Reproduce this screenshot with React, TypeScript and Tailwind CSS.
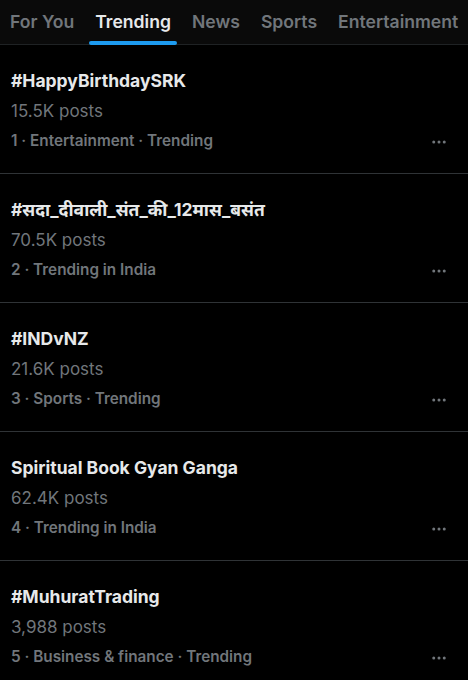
const tabs = ["For You", "Trending", "News", "Sports", "Entertainment"];

const trends = [
  { title: "#HappyBirthdaySRK", posts: "15.5K posts", meta: "1 · Entertainment · Trending" },
  { title: "#सदा_दीवाली_संत_की_12मास_बसंत", posts: "70.5K posts", meta: "2 · Trending in India" },
  { title: "#INDvNZ", posts: "21.6K posts", meta: "3 · Sports · Trending" },
  { title: "Spiritual Book Gyan Ganga", posts: "62.4K posts", meta: "4 · Trending in India" },
  { title: "#MuhuratTrading", posts: "3,988 posts", meta: "5 · Business & finance · Trending" },
];

function Dots() {
  return (
    <svg width="18" height="18" viewBox="0 0 24 24" fill="#71767b">
      <circle cx="5" cy="12" r="2" />
      <circle cx="12" cy="12" r="2" />
      <circle cx="19" cy="12" r="2" />
    </svg>
  );
}

export default function App() {
  return (
    <div className="h-[680px] w-[468px] overflow-hidden bg-black font-['Inter','Noto_Sans','Noto_Sans_Devanagari',sans-serif]">
      <div className="flex h-[45px] items-stretch gap-[21px] border-b border-[#1f2224] bg-[#0a0a0a] pl-[10px] text-[17.6px] font-semibold">
        {tabs.map((t) => (
          <div key={t} className="relative flex items-center">
            <span className={t === "Trending" ? "text-[#e7e9ea]" : "text-[#71767b]"}>{t}</span>
            {t === "Trending" && (
              <div className="absolute bottom-[-1px] left-[-6px] right-[-6px] h-[4px] rounded-full bg-[#1d9bf0]" />
            )}
          </div>
        ))}
      </div>
      <div>
        {trends.map((tr, i) => (
          <div key={i} className="flex h-[129px] border-b border-[#2f3336] pl-[11px] pr-[20px] pt-[23px]">
            <div className="flex-1">
              <div className="text-[17.5px] font-bold leading-[26px] text-[#e7e9ea]">{tr.title}</div>
              <div className="mt-[4px] text-[17px] leading-[26px] text-[#71767b]">{tr.posts}</div>
              <div className="mt-[4px] text-[15.3px] font-semibold leading-[26px] text-[#71767b]">{tr.meta}</div>
            </div>
            <div className="flex items-center self-start pt-[65px]">
              <Dots />
            </div>
          </div>
        ))}
      </div>
    </div>
  );
}
